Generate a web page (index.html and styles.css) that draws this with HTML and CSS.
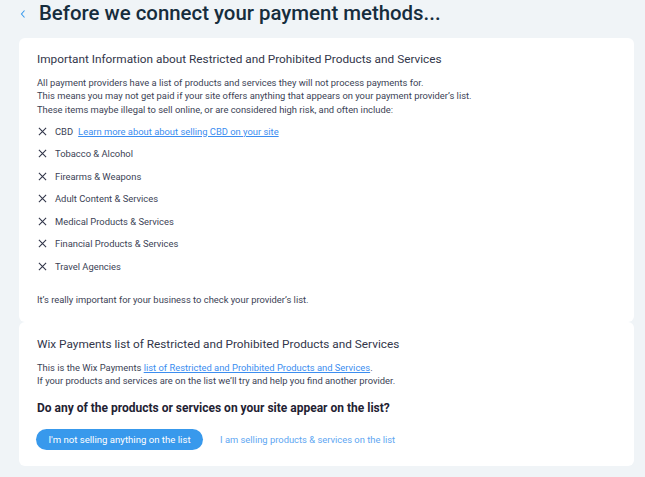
FILE: index.html
```html
<!DOCTYPE html>
<html>
<head>
<meta charset="utf-8">
<link rel="stylesheet" href="styles.css">
</head>
<body>
<div class="page">
  <header class="top">
    <svg class="back" width="8" height="10" viewBox="0 0 8 10"><path d="M5.5 1.5 L2.5 5 L5.5 8.5" fill="none" stroke="#3899ec" stroke-width="1.1"/></svg>
    <h1 class="title">Before we connect your payment methods...</h1>
  </header>
  <section class="card first">
    <h2 class="card-title">Important Information about Restricted and Prohibited Products and Services</h2>
    <p class="text">All payment providers have a list of products and services they will not process payments for.<br>This means you may not get paid if your site offers anything that appears on your payment provider’s list.<br>These items maybe illegal to sell online, or are considered high risk, and often include:</p>
    <ul class="list">
      <li><svg class="x" viewBox="0 0 10 10"><path d="M1 1 L9 9 M9 1 L1 9"/></svg><span>CBD</span><a class="link" href="#">Learn more about about selling CBD on your site</a></li>
      <li><svg class="x" viewBox="0 0 10 10"><path d="M1 1 L9 9 M9 1 L1 9"/></svg><span>Tobacco &amp; Alcohol</span></li>
      <li><svg class="x" viewBox="0 0 10 10"><path d="M1 1 L9 9 M9 1 L1 9"/></svg><span>Firearms &amp; Weapons</span></li>
      <li><svg class="x" viewBox="0 0 10 10"><path d="M1 1 L9 9 M9 1 L1 9"/></svg><span>Adult Content &amp; Services</span></li>
      <li><svg class="x" viewBox="0 0 10 10"><path d="M1 1 L9 9 M9 1 L1 9"/></svg><span>Medical Products &amp; Services</span></li>
      <li><svg class="x" viewBox="0 0 10 10"><path d="M1 1 L9 9 M9 1 L1 9"/></svg><span>Financial Products &amp; Services</span></li>
      <li><svg class="x" viewBox="0 0 10 10"><path d="M1 1 L9 9 M9 1 L1 9"/></svg><span>Travel Agencies</span></li>
    </ul>
    <p class="text note">It’s really important for your business to check your provider’s list.</p>
  </section>
  <section class="card second">
    <h2 class="card-title">Wix Payments list of Restricted and Prohibited Products and Services</h2>
    <p class="text">This is the Wix Payments <a class="link" href="#">list of Restricted and Prohibited Products and Services</a>.<br>If your products and services are on the list we’ll try and help you find another provider.</p>
    <h3 class="question">Do any of the products or services on your site appear on the list?</h3>
    <div class="actions">
      <button class="btn">I'm not selling anything on the list</button>
      <a class="alt" href="#">I am selling products &amp; services on the list</a>
    </div>
  </section>
</div>
</body>
</html>
```
FILE: styles.css
```css
* { box-sizing: border-box; }
html, body { margin: 0; padding: 0; }
body {
  background: #f0f4f7;
  font-family: Roboto, "Noto Sans", sans-serif;
  color: #32364a;
  width: 645px;
  height: 477px;
  overflow: hidden;
}
.page { padding: 0 11px 0 19px; }
.top {
  display: flex;
  align-items: center;
  height: 27px;
}
.back { width: 8px; height: 10px; flex: none; }
.title {
  margin: 0 0 0 12px;
  font-size: 20.4px;
  font-weight: 500;
  color: #162d3d;
  line-height: 27px;
}
.card {
  background: #fff;
  border-radius: 6px;
  padding: 0 18px;
}
.first { margin-top: 11px; padding-top: 12px; height: 284px; }
.second { padding-top: 13px; height: 144px; }
.card-title {
  margin: 0;
  font-size: 11.8px;
  font-weight: 400;
  line-height: 18px;
  color: #32364a;
}
.text {
  margin: 8px 0 0;
  font-size: 9.4px;
  line-height: 13.3px;
  color: #3b3f55;
}
.list {
  list-style: none;
  margin: 4px 0 0;
  padding: 0;
}
.list li {
  display: flex;
  align-items: center;
  height: 22.5px;
  font-size: 9.4px;
  color: #3b3f55;
}
.x {
  width: 9px;
  height: 9px;
  margin: 0 8px 0 1px;
  flex: none;
  stroke: #32364a;
  stroke-width: 1.2;
  fill: none;
}
.link {
  color: #3b8df0;
  text-decoration: underline;
  margin-left: 5px;
}
.text .link { margin-left: 0; }
.note { margin-top: 16px; }
.question {
  margin: 12px 0 0;
  font-size: 12px;
  font-weight: 700;
  color: #1f2233;
  line-height: 17px;
}
.actions {
  display: flex;
  align-items: center;
  margin-top: 12px;
  gap: 17px;
}
.btn {
  font-family: inherit;
  background: #3899ec;
  color: #fff;
  border: none;
  border-radius: 11px;
  height: 21px;
  width: 167px;
  font-size: 9.6px;
  padding: 0;
  margin-left: -1px;
}
.alt {
  color: #5ea6f2;
  font-size: 9.4px;
  text-decoration: none;
}
```
